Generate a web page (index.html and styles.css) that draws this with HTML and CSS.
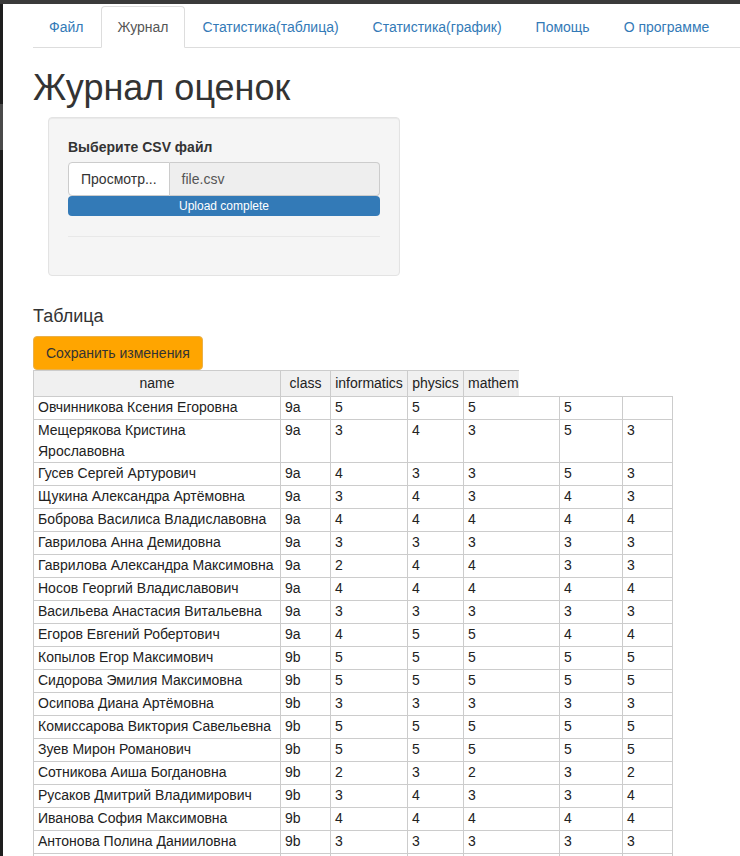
FILE: index.html
```html
<!DOCTYPE html>
<html lang="ru">
<head>
<meta charset="utf-8">
<title>Журнал оценок</title>
<link rel="stylesheet" href="styles.css">
</head>
<body>
<div class="topbar"></div>
<div class="shell">
  <div class="edge"><div class="edge-thumb"></div></div>
  <div class="page">
    <ul class="tabs">
      <li><a href="#">Файл</a></li>
      <li class="active"><a href="#">Журнал</a></li>
      <li><a href="#">Статистика(таблица)</a></li>
      <li><a href="#">Статистика(график)</a></li>
      <li><a href="#">Помощь</a></li>
      <li><a href="#">О программе</a></li>
    </ul>
    <h1 class="title">Журнал оценок</h1>
    <div class="well">
      <label class="field-label">Выберите CSV файл</label>
      <div class="input-group">
        <span class="browse">Просмотр...</span>
        <span class="filename">file.csv</span>
      </div>
      <div class="progress">Upload complete</div>
      <hr class="divider">
    </div>
    <h4 class="section">Таблица</h4>
    <button class="save" type="button">Сохранить изменения</button>
    <div class="grid">
      <div class="grid-head">
        <div class="th c-name">name</div>
        <div class="th c-class">class</div>
        <div class="th c-inf">informatics</div>
        <div class="th c-phys">physics</div>
        <div class="th c-5 th-clip">mathematics</div>
      </div>
      <table class="grid-body">
        <colgroup>
          <col class="c-name"><col class="c-class"><col class="c-inf"><col class="c-phys"><col class="c-5"><col class="c-6"><col class="c-7">
        </colgroup>
        <tbody>
          <tr><td>Овчинникова Ксения Егоровна</td><td>9a</td><td>5</td><td>5</td><td>5</td><td>5</td><td></td></tr>
          <tr><td>Мещерякова Кристина<br>Ярославовна</td><td>9a</td><td>3</td><td>4</td><td>3</td><td>5</td><td>3</td></tr>
          <tr><td>Гусев Сергей Артурович</td><td>9a</td><td>4</td><td>3</td><td>3</td><td>5</td><td>3</td></tr>
          <tr><td>Щукина Александра Артёмовна</td><td>9a</td><td>3</td><td>4</td><td>3</td><td>4</td><td>3</td></tr>
          <tr><td>Боброва Василиса Владиславовна</td><td>9a</td><td>4</td><td>4</td><td>4</td><td>4</td><td>4</td></tr>
          <tr><td>Гаврилова Анна Демидовна</td><td>9a</td><td>3</td><td>3</td><td>3</td><td>3</td><td>3</td></tr>
          <tr><td>Гаврилова Александра Максимовна</td><td>9a</td><td>2</td><td>4</td><td>4</td><td>3</td><td>3</td></tr>
          <tr><td>Носов Георгий Владиславович</td><td>9a</td><td>4</td><td>4</td><td>4</td><td>4</td><td>4</td></tr>
          <tr><td>Васильева Анастасия Витальевна</td><td>9a</td><td>3</td><td>3</td><td>3</td><td>3</td><td>3</td></tr>
          <tr><td>Егоров Евгений Робертович</td><td>9a</td><td>4</td><td>5</td><td>5</td><td>4</td><td>4</td></tr>
          <tr><td>Копылов Егор Максимович</td><td>9b</td><td>5</td><td>5</td><td>5</td><td>5</td><td>5</td></tr>
          <tr><td>Сидорова Эмилия Максимовна</td><td>9b</td><td>5</td><td>5</td><td>5</td><td>5</td><td>5</td></tr>
          <tr><td>Осипова Диана Артёмовна</td><td>9b</td><td>3</td><td>3</td><td>3</td><td>3</td><td>3</td></tr>
          <tr><td>Комиссарова Виктория Савельевна</td><td>9b</td><td>5</td><td>5</td><td>5</td><td>5</td><td>5</td></tr>
          <tr><td>Зуев Мирон Романович</td><td>9b</td><td>5</td><td>5</td><td>5</td><td>5</td><td>5</td></tr>
          <tr><td>Сотникова Аиша Богдановна</td><td>9b</td><td>2</td><td>3</td><td>2</td><td>3</td><td>2</td></tr>
          <tr><td>Русаков Дмитрий Владимирович</td><td>9b</td><td>3</td><td>4</td><td>3</td><td>3</td><td>4</td></tr>
          <tr><td>Иванова София Максимовна</td><td>9b</td><td>4</td><td>4</td><td>4</td><td>4</td><td>4</td></tr>
          <tr><td>Антонова Полина Данииловна</td><td>9b</td><td>3</td><td>3</td><td>3</td><td>3</td><td>3</td></tr>
          <tr><td></td><td></td><td></td><td></td><td></td><td></td><td></td></tr>
        </tbody>
      </table>
    </div>
  </div>
</div>
</body>
</html>
```
FILE: styles.css
```css
* { box-sizing: border-box; }
html, body { margin: 0; padding: 0; background: #fff; }
body {
  font-family: "Liberation Sans", Arial, Helvetica, sans-serif;
  font-size: 14px;
  line-height: 20px;
  color: #333;
}
.topbar { height: 4px; background: #3a3a3a; }
.shell { display: flex; min-height: 852px; }
.edge {
  width: 3px; flex: none; background: #1e1e1e;
  display: flex; flex-direction: column;
}
.edge-thumb { margin-top: 100px; height: 46px; background: #4a4a4a; }
.page {
  flex: 1; padding-left: 30px;
  display: flex; flex-direction: column; align-items: flex-start;
}
.tabs {
  list-style: none; margin: 2px 0 0; padding: 0;
  display: flex; align-self: stretch;
  border-bottom: 1px solid #ddd;
}
.tabs li { margin-bottom: -1px; }
.tabs a {
  display: block; margin-right: 2px; padding: 10px 15px;
  line-height: 20px; border: 1px solid transparent;
  border-radius: 4px 4px 0 0; color: #337ab7; text-decoration: none;
}
.tabs .active a {
  color: #555; background: #fff;
  border-color: #ddd #ddd transparent;
}
.title {
  margin: 20px 0 10px; font-size: 36px; line-height: 39px;
  font-weight: 400; color: #333;
}
.well {
  width: 352px; padding: 19px; margin: 0 0 20px 15px;
  background: #f5f5f5; border: 1px solid #e3e3e3; border-radius: 4px;
  box-shadow: inset 0 1px 1px rgba(0,0,0,.05);
  display: flex; flex-direction: column; align-items: flex-start;
}
.field-label { font-weight: 700; margin-bottom: 5px; }
.input-group { display: flex; align-self: stretch; height: 34px; }
.browse {
  flex: none; padding: 6px 12px; border: 1px solid #ccc;
  border-radius: 4px 0 0 4px; background: #fff; color: #333;
}
.filename {
  flex: 1; padding: 6px 12px; border: 1px solid #ccc; border-left: 0;
  border-radius: 0 4px 4px 0; background: #eee; color: #555;
}
.progress {
  align-self: stretch; height: 20px; background: #337ab7; color: #fff;
  border-radius: 4px; font-size: 12px; line-height: 20px; text-align: center;
}
.divider {
  align-self: stretch; margin: 20px 0 19px; height: 0;
  border: 0; border-top: 1px solid #e8e8e8;
}
.section {
  margin: 10px 0; font-size: 18px; line-height: 20px;
  font-weight: 400; color: #333;
}
.save {
  margin: 0; padding: 6px 12px; height: 34px;
  font-family: inherit; font-size: 14px; line-height: 20px; color: #333;
  background: #ffa500; border: 1px solid #e9b04a; border-radius: 4px;
}
.grid { display: flex; flex-direction: column; }
.grid-head {
  display: flex; width: 486px; overflow: hidden;
  border-top: 1px solid #ccc; border-left: 1px solid #ccc;
}
.th {
  flex: none; height: 25px; line-height: 25px; text-align: center;
  background: #f0f0f0; border-right: 1px solid #ccc; color: #222;
  white-space: nowrap; overflow: hidden;
}
.th-clip { text-align: left; padding-left: 4px; border-right: 0; }
.c-name { width: 247px; }
.c-class { width: 50px; }
.c-inf { width: 77px; }
.c-phys { width: 56px; }
.c-5 { width: 96px; }
.c-6 { width: 63px; }
.c-7 { width: 50px; }
.grid-body {
  border-collapse: separate; border-spacing: 0; table-layout: fixed;
  width: 640px; border-top: 1px solid #ccc; border-left: 1px solid #ccc;
}
.grid-body td {
  height: 23px; padding: 0 4px; line-height: 21px; vertical-align: top;
  border-right: 1px solid #ccc; border-bottom: 1px solid #ccc;
  color: #222; overflow: hidden;
}
```
